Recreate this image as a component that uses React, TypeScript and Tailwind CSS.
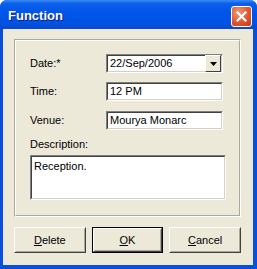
import type { ReactNode } from "react";

const sunken =
  "border-t-[#7f7f7f] border-l-[#7f7f7f] border-b-white border-r-white border";

function Field({ children, className = "" }: { children: ReactNode; className?: string }) {
  return (
    <div className={`${sunken} h-[19px] ${className}`}>
      <div className="h-full border border-t-[#404040] border-l-[#404040] border-b-[#d4d0c8] border-r-[#d4d0c8] bg-white flex items-center pl-[2px] text-[11px] text-black">
        {children}
      </div>
    </div>
  );
}

function Button({ label, hot, isDefault }: { label: string; hot: string; isDefault?: boolean }) {
  const rest = label.slice(hot.length);
  return (
    <button
      type="button"
      className={`w-[72px] h-[26px] ${isDefault ? "border border-black" : ""} bg-[#ece9d8]`}
    >
      <div className="h-full border border-t-white border-l-white border-b-[#404040] border-r-[#404040]">
        <div className="h-full border border-t-[#ece9d8] border-l-[#ece9d8] border-b-[#aca899] border-r-[#aca899] flex items-center justify-center text-[11px] text-black">
          <span className="underline underline-offset-1">{hot}</span>
          {rest}
        </div>
      </div>
    </button>
  );
}

export default function App() {
  return (
    <div className="w-[257px] h-[269px] bg-white" style={{ fontFamily: '"Liberation Sans", Arial, sans-serif' }}>
      <div className="w-full h-full flex flex-col rounded-t-[7px] bg-[#0a4fdb] overflow-hidden">
        {/* title bar */}
        <div className="h-[29px] shrink-0 flex items-center justify-between pl-[8px] pr-[5px] bg-[linear-gradient(180deg,#3b8cf5_0%,#0b5fe8_12%,#0055ea_45%,#0052e2_80%,#0a49cc_100%)]">
          <span className="text-white font-bold text-[13px] [text-shadow:1px_1px_0_#0a1e70] mt-[2px]">
            Function
          </span>
          <div className="w-[21px] h-[21px] mt-[3px] rounded-[3px] border border-white bg-[radial-gradient(circle_at_35%_30%,#f09a78_0%,#e0552f_55%,#c23a18_100%)] flex items-center justify-center">
            <svg width="11" height="11" viewBox="0 0 11 11">
              <path d="M1.5 1.5 L9.5 9.5 M9.5 1.5 L1.5 9.5" stroke="white" strokeWidth="2.2" strokeLinecap="square" />
            </svg>
          </div>
        </div>

        {/* body */}
        <div className="flex-1 ml-[3px] mr-[4px] mb-[4px] bg-[#ece9d8] flex flex-col pl-[11px] pr-[12px] pt-[10px]">
          {/* group box */}
          <div className="h-[178px] border border-t-[#aca899] border-l-[#aca899] border-b-white border-r-white">
            <div className="h-full border border-t-white border-l-white border-b-[#aca899] border-r-[#aca899] pl-[14px] pr-[14px] pt-[13px] text-[11px] text-black">
              <div className="flex items-center h-[19px]">
                <span className="w-[76px]">Date:*</span>
                <Field className="w-[117px]">
                  <div className="flex-1">22/Sep/2006</div>
                  <div className="w-[16px] h-[17px] bg-[#ece9d8] border border-t-white border-l-white border-b-[#404040] border-r-[#404040] flex items-center justify-center">
                    <svg width="7" height="4" viewBox="0 0 7 4">
                      <path d="M0 0 H7 L3.5 4 Z" fill="black" />
                    </svg>
                  </div>
                </Field>
              </div>
              <div className="flex items-center h-[19px] mt-[9px]">
                <span className="w-[76px]">Time:</span>
                <Field className="w-[117px]">12 PM</Field>
              </div>
              <div className="flex items-center h-[19px] mt-[10px]">
                <span className="w-[76px]">Venue:</span>
                <Field className="w-[117px]">Mourya Monarc</Field>
              </div>
              <div className="mt-[8px] leading-[13px]">Description:</div>
              <div className={`${sunken} mt-[4px] h-[45px] w-[196px]`}>
                <div className="h-full border border-t-[#404040] border-l-[#404040] border-b-[#d4d0c8] border-r-[#d4d0c8] bg-white pl-[2px] pt-[1px]">
                  Reception.
                </div>
              </div>
            </div>
          </div>

          {/* buttons */}
          <div className="flex gap-[6px] mt-[10px]">
            <Button label="Delete" hot="D" />
            <Button label="OK" hot="O" isDefault />
            <Button label="Cancel" hot="C" />
          </div>
        </div>
      </div>
    </div>
  );
}
